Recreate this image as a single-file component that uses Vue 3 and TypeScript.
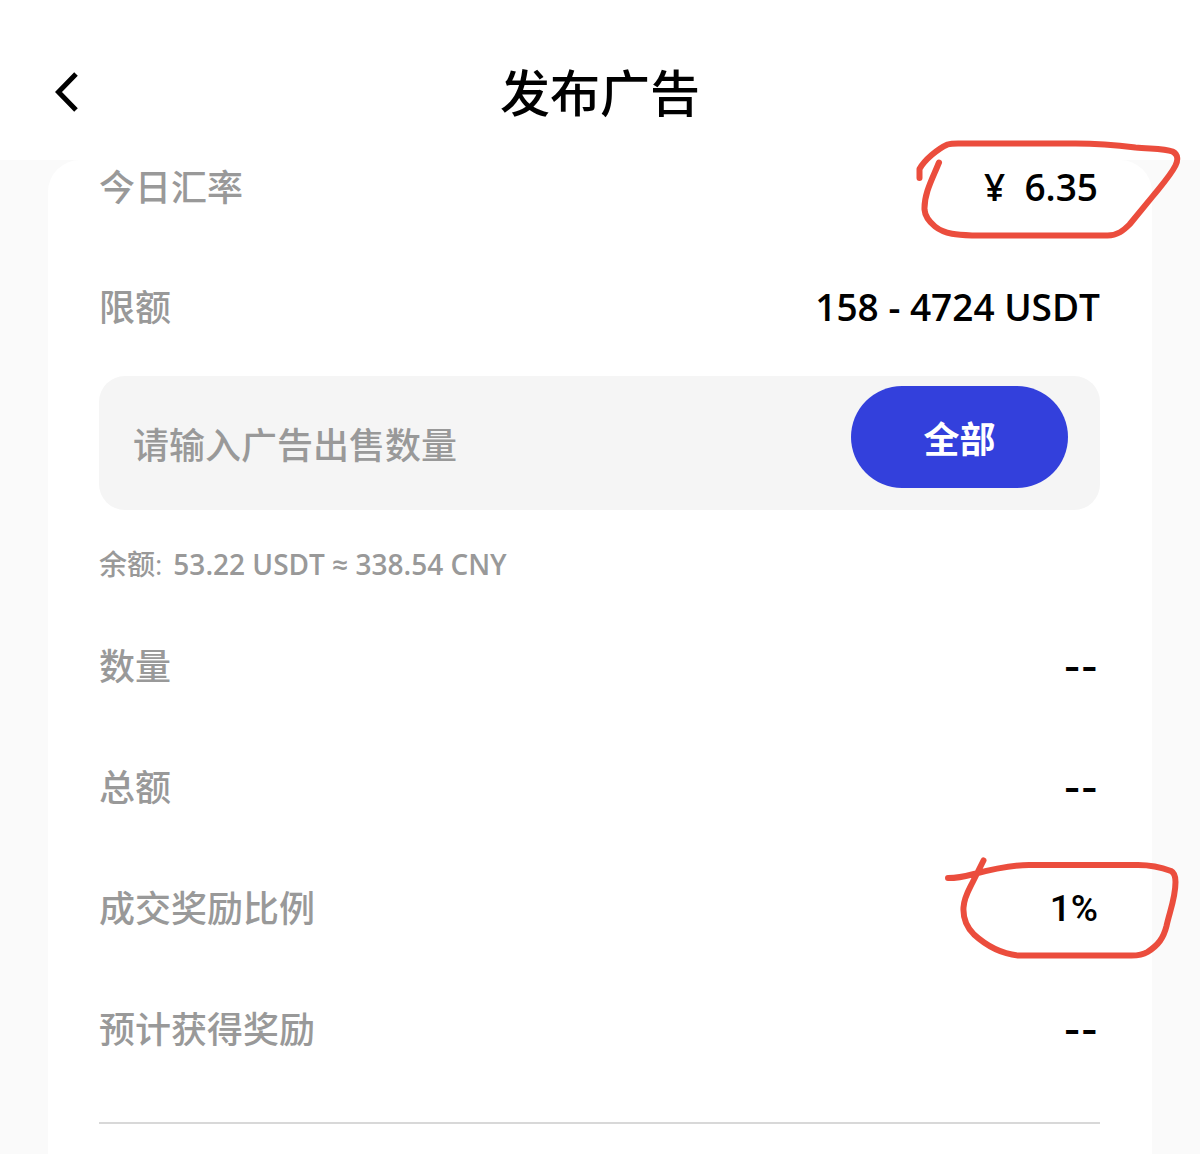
<script setup lang="ts">
import { ref } from 'vue'

interface Row {
  label: string
  value: string
  kind?: 'rate' | 'reward' | 'empty'
}

const amount = ref('')
const balance = '53.22'

const limits: Row[] = [
  { label: '今日汇率', value: '¥\u00a0 6.35', kind: 'rate' },
  { label: '限额', value: '158 - 4724 USDT' },
]

const summary: Row[] = [
  { label: '数量', value: '--', kind: 'empty' },
  { label: '总额', value: '--', kind: 'empty' },
  { label: '成交奖励比例', value: '1%', kind: 'reward' },
  { label: '预计获得奖励', value: '--', kind: 'empty' },
]

function fillAll(): void {
  amount.value = balance
}
</script>

<template>
  <div class="page">
    <header class="header">
      <button class="back" type="button" aria-label="返回">
        <svg width="26" height="42" viewBox="0 0 26 42" fill="none" stroke="#000" stroke-width="5">
          <path d="M22 3 4.500 21 22 39" />
        </svg>
      </button>
      <h1 class="title">发布广告</h1>
    </header>

    <main class="card">
      <dl class="rows">
        <div v-for="row in limits" :key="row.label" class="row">
          <dt>{{ row.label }}</dt>
          <dd :class="row.kind">
            {{ row.value }}
            <svg v-if="row.kind === 'rate'" class="mark" width="270" height="104" viewBox="914 138 270 104">
              <path d="M919.500 178v-9c5-9 18-20 28-24.500 5-1.500 10-1 16-1h112c17 0 44 2 60 4 15 1.500 29 1 37 4 6 3 5.500 9 3 14-5 10-15 21-23 31l-23 28c-6 6-12 11-22 11H972c-14-.500-27-1-37-9-6-5-10-10-10.500-17-.500-16 8-31 14.500-47" />
            </svg>
          </dd>
        </div>
      </dl>

      <div class="field">
        <input v-model="amount" type="text" aria-label="广告出售数量" placeholder="请输入广告出售数量" />
        <button class="all" type="button" @click="fillAll">全部</button>
      </div>

      <p class="balance">
        <span class="balance-label">余额:</span>
        <span>{{ balance }} USDT ≈ 338.54 CNY</span>
      </p>

      <dl class="rows summary">
        <div v-for="row in summary" :key="row.label" class="row">
          <dt>{{ row.label }}</dt>
          <dd :class="row.kind">
            {{ row.value }}
            <svg v-if="row.kind === 'reward'" class="mark" width="240" height="106" viewBox="942 855 240 106">
              <path d="M948 877c8 0 15-1 24-3.500 17-4.500 38-9.500 57-9.500h109c14 0 25 3 33 6 4 2 4.500 6 4.500 11 0 16-6 30-9 44-3 12-8 19-19 26-5 3-9 3.500-16 3.500H1018c-18-2-33-11-44-21-9-9-11-18-10.500-27 .500-10 5-17 9-25 4-8 7-14 11-22" />
            </svg>
          </dd>
        </div>
      </dl>

      <hr class="divider" />
    </main>
  </div>
</template>

<style>
body {
  margin: 0;
  background: #fafafa;
}
</style>

<style scoped>
.page {
  min-height: 100vh;
  box-sizing: border-box;
  display: flex;
  flex-direction: column;
  font-family: 'Open Sans', 'Noto Sans CJK SC', sans-serif;
  font-weight: 600;
  color: #000;
  background: #fafafa;
}

.header {
  display: grid;
  grid-template-columns: 80px 1fr 80px;
  align-items: center;
  box-sizing: border-box;
  height: 160px;
  padding-top: 26px;
  background: #fff;
}

.back {
  display: flex;
  justify-content: flex-end;
  padding: 0 0 2px;
  border: 0;
  background: none;
}

.title {
  margin: 0;
  font-size: 50px;
  font-weight: 500;
  line-height: 72px;
  text-align: center;
}

.card {
  flex: 1;
  margin: 0 48px;
  padding: 1px 52px 30px 51px;
  border-radius: 32px 32px 0 0;
  background: #fff;
}

.rows {
  display: flex;
  flex-direction: column;
  gap: 66px;
  margin: 0;
}

.rows.summary {
  gap: 67px;
}

.row {
  display: flex;
  justify-content: space-between;
  font-size: 36px;
  line-height: 54px;
}

.row dt {
  color: #999;
  font-weight: 500;
}

.row dd {
  position: relative;
  margin: 0;
  font-size: 37px;
  line-height: 52px;
}

.row dd.rate,
.row dd.reward,
.row dd.empty {
  padding-right: 2px;
}

.row dd.reward {
  font-family: Roboto, sans-serif;
  font-weight: 500;
  line-height: 54px;
}

.row dd.empty {
  font-family: Inter, sans-serif;
  line-height: 54px;
}

.mark {
  position: absolute;
  fill: none;
  stroke: #eb4d3d;
  stroke-width: 6;
  stroke-linecap: round;
  stroke-linejoin: round;
  pointer-events: none;
}

.rate .mark {
  top: -23px;
  right: -84px;
}

.reward .mark {
  top: -26px;
  right: -82px;
}

.field {
  display: flex;
  align-items: flex-start;
  box-sizing: border-box;
  height: 134px;
  margin-top: 41px;
  padding: 10px 32px 10px 34px;
  border-radius: 26px;
  background: #f5f5f5;
}

.field input {
  flex: 1;
  min-width: 0;
  height: 118px;
  padding: 0;
  border: 0;
  outline: 0;
  background: none;
  color: #000;
  font: inherit;
  font-size: 36px;
  font-weight: 500;
}

.field input::placeholder {
  color: #999;
  opacity: 1;
}

.all {
  width: 217px;
  height: 102px;
  padding: 0;
  border: 0;
  border-radius: 51px;
  background: #3340dc;
  color: #fff;
  font: inherit;
  font-size: 36px;
}

.balance {
  display: flex;
  gap: 11px;
  margin: 33px 0 55px;
  color: #999;
  font-size: 28px;
  line-height: 42px;
}

.balance-label {
  font-weight: 500;
}

.divider {
  height: 2px;
  margin: 65px 0 0;
  border: 0;
  background: #d8d8d8;
}
</style>
